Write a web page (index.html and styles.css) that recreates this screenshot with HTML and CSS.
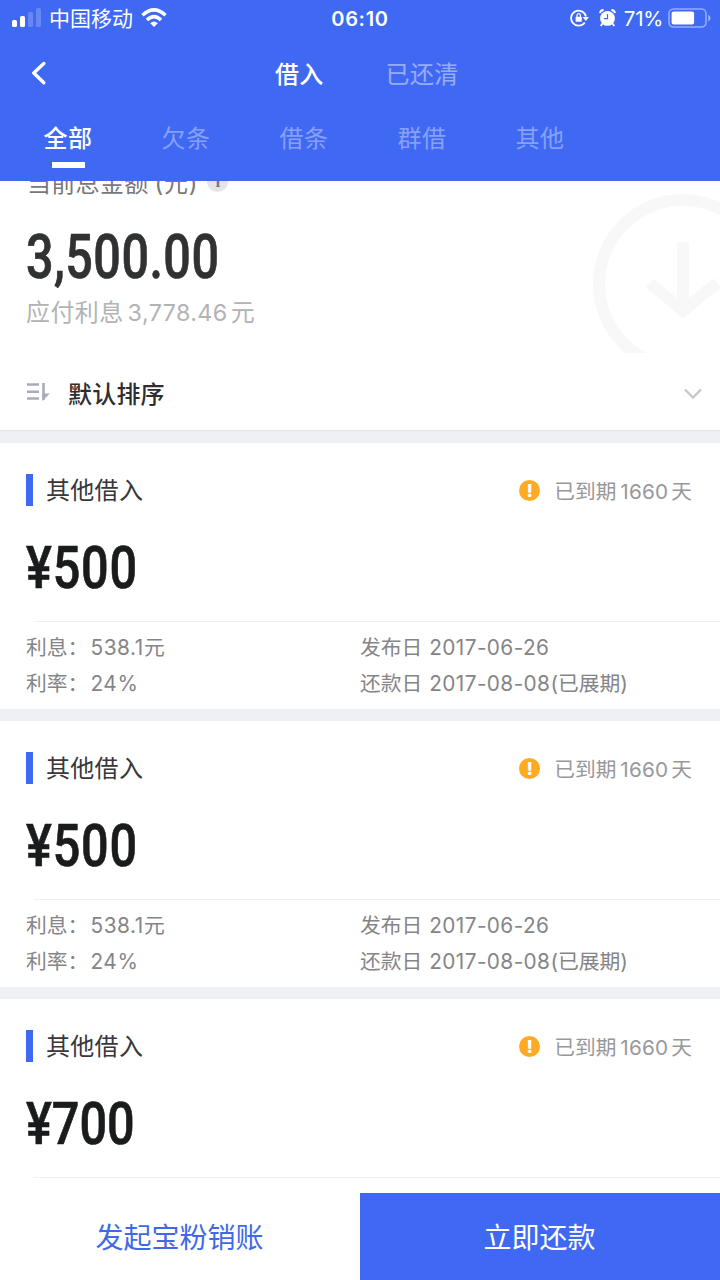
FILE: index.html
```html
<!DOCTYPE html>
<html lang="zh-CN">
<head>
    <meta charset="UTF-8">
    <meta name="viewport" content="width=device-width, initial-scale=1.0">
    <title>借入</title>
    <link rel="stylesheet" href="styles.css">
</head>
<body>
    <div id="app">
        <header class="header">
            <div class="status-bar">
                <div class="status-left">
                    <svg class="signal" width="30" height="20" viewBox="0 0 30 20" fill="#fff">
                        <rect x="0" y="12" width="5" height="7" rx="1.5"/>
                        <rect x="8" y="8" width="5" height="11" rx="1.5"/>
                        <rect x="16" y="4" width="5" height="15" rx="1.5" opacity=".2"/>
                        <rect x="24" y="0" width="5" height="19" rx="1.5" opacity=".2"/>
                    </svg>
                    <span class="carrier">中国移动</span>
                    <svg class="wifi" width="26" height="20" viewBox="0 0 26 20" fill="none" stroke="#fff" stroke-width="3.5">
                        <path d="M1.5 7.2Q13-3.4 24.5 7.2"/>
                        <path d="M6 12Q13 5.2 20 12"/>
                        <path d="M9.2 15.2Q13 11.6 16.8 15.2L13 19Z" fill="#fff" stroke="none"/>
                    </svg>
                </div>
                <span class="time">06:10</span>
                <div class="status-right">
                    <svg class="lock" width="19" height="18" viewBox="0 0 19 18" fill="none" stroke="#fff">
                        <path d="M14.8 13.4A7.5 7.5 0 1 1 15.9 7.5" stroke-width="1.8"/>
                        <path d="M12.6 8H19L15.8 12Z" fill="#fff" stroke="none"/>
                        <rect x="5.6" y="7.8" width="6.2" height="5" rx=".6" fill="#fff" stroke="none"/>
                        <path d="M7 8V6.4a1.7 1.7 0 0 1 3.4 0V8" stroke-width="1.2"/>
                    </svg>
                    <svg class="alarm" width="17" height="18" viewBox="0 0 17 18" fill="#fff">
                        <circle cx="8.5" cy="9.4" r="7.4"/>
                        <path d="M1 4.2Q1.4 1.2 4.6 1M12.4 1Q15.6 1.2 16 4.2" fill="none" stroke="#fff" stroke-width="1.8"/>
                        <path d="M3.5 14.5L1.7 17M13.5 14.5L15.3 17" stroke="#fff" stroke-width="1.9"/>
                        <path d="M8.5 5V9.7H4.8" fill="none" stroke="#4069f3" stroke-width="1.2"/>
                    </svg>
                    <span class="percent">71%</span>
                    <svg class="battery" width="43" height="20" viewBox="0 0 43 20" fill="#fff">
                        <rect x="1" y="1" width="37" height="18" rx="4.5" fill="none" stroke="#fff" stroke-width="1.6" opacity=".45"/>
                        <rect x="3.6" y="3.5" width="22.5" height="13" rx="2"/>
                        <path d="M40.3 6.5Q42.5 8 42.5 10T40.3 13.5Z" opacity=".5"/>
                    </svg>
                </div>
            </div>
            <nav class="nav-bar">
                <svg class="back" width="16" height="24" viewBox="0 0 16 24" fill="none" stroke="#fff" stroke-width="3.4" stroke-linecap="round" stroke-linejoin="round">
                    <path d="M13.8 2.5L3.8 12L13.8 21.8"/>
                </svg>
                <span class="nav-item active">借入</span>
                <span class="nav-item">已还清</span>
            </nav>
            <div class="tabs">
                <span class="tab active">全部</span>
                <span class="tab">欠条</span>
                <span class="tab">借条</span>
                <span class="tab">群借</span>
                <span class="tab">其他</span>
            </div>
        </header>

        <section class="summary">
            <div class="summary-info">
                <p class="summary-title">当前总金额<span class="unit">(元)</span><i class="info">i</i></p>
                <p class="total">3,500.00</p>
                <p class="interest">应付利息<span class="interest-num">3,778.46</span>元</p>
            </div>
            <svg class="arrow-bg" width="128" height="160" viewBox="0 0 128 160" fill="none" stroke="#f8f8f8" stroke-width="12">
                <circle cx="91" cy="91" r="84"/>
                <path d="M91 49V115M58 90L91 118L125 90"/>
            </svg>
        </section>

        <div class="sort">
            <svg width="24" height="20" viewBox="0 0 24 20" fill="none" stroke="#a9adb9" stroke-width="2.4">
                <path d="M1 2.5H13M1 9.8H13M1 16.5H13"/>
                <path d="M17.5 1V18" stroke-width="2.6"/>
                <path d="M16.3 19V11.5H23.8Z" fill="#a9adb9" stroke="none"/>
            </svg>
            <span class="sort-name">默认排序</span>
            <svg class="chevron" width="18" height="12" viewBox="0 0 18 12" fill="none" stroke="#c8c8ca" stroke-width="2.4">
                <path d="M1 1.5L9 9.5L17 1.5"/>
            </svg>
        </div>

        <main class="list">
            <article class="card">
                <div class="card-head">
                    <span class="card-title">其他借入</span>
                    <span class="badge">!</span>
                    <span class="due">已到期<span class="days">1660</span>天</span>
                </div>
                <p class="amount">¥500</p>
                <div class="details">
                    <div class="col">
                        <p>利息：<span class="num">538.1</span>元</p>
                        <p>利率：<span class="num">24%</span></p>
                    </div>
                    <div class="col">
                        <p>发布日 <span class="date">2017-06-26</span></p>
                        <p>还款日 <span class="date">2017-08-08</span>(已展期)</p>
                    </div>
                </div>
            </article>
            <article class="card">
                <div class="card-head">
                    <span class="card-title">其他借入</span>
                    <span class="badge">!</span>
                    <span class="due">已到期<span class="days">1660</span>天</span>
                </div>
                <p class="amount">¥500</p>
                <div class="details">
                    <div class="col">
                        <p>利息：<span class="num">538.1</span>元</p>
                        <p>利率：<span class="num">24%</span></p>
                    </div>
                    <div class="col">
                        <p>发布日 <span class="date">2017-06-26</span></p>
                        <p>还款日 <span class="date">2017-08-08</span>(已展期)</p>
                    </div>
                </div>
            </article>
            <article class="card">
                <div class="card-head">
                    <span class="card-title">其他借入</span>
                    <span class="badge">!</span>
                    <span class="due">已到期<span class="days">1660</span>天</span>
                </div>
                <p class="amount narrow">¥700</p>
                <div class="details"></div>
            </article>
        </main>

        <footer class="footer">
            <button class="btn">发起宝粉销账</button>
            <button class="btn primary">立即还款</button>
        </footer>
    </div>
</body>
</html>
```
FILE: styles.css
```css
*{
    box-sizing: border-box;
}

body{
    margin: 0;
    background-color: #ffffff;
    font-family: Inter, "Noto Sans CJK SC", sans-serif;
}

p{
    margin: 0;
}

svg{
    display: block;
    flex: none;
}

#app{
    display: flex;
    flex-direction: column;
    width: 720px;
    height: 1280px;
    overflow: hidden;
    white-space: nowrap;
}

.header{
    flex: none;
    height: 181px;
    background-color: #4069f3;
    color: #ffffff;
}

.status-bar{
    display: grid;
    grid-template-columns: 1fr auto 1fr;
    align-items: center;
    height: 36px;
    padding: 0 9px 0 12px;
}

.status-left, .status-right{
    display: flex;
    align-items: center;
}

.status-right{
    justify-content: flex-end;
}

.carrier{
    margin: 0 8px 0 7px;
    padding-top: 2px;
    font-size: 21px;
    line-height: 34px;
}

.time{
    margin-right: 3px;
    padding-top: 1px;
    font-size: 20px;
    font-weight: 600;
    letter-spacing: 0.7px;
}

.alarm{
    margin: 0 8px 0 10px;
}

.percent{
    margin-right: 5px;
    padding-top: 1px;
    font-size: 20.5px;
    letter-spacing: -0.3px;
}

.nav-bar{
    display: flex;
    align-items: center;
    height: 74px;
    padding-left: 30px;
}

.nav-item{
    margin: -1px 62px 0 0;
    font-size: 24px;
    letter-spacing: 0.3px;
    opacity: 0.45;
}

.nav-item.active{
    font-weight: 500;
    opacity: 1;
}

.back{
    margin-right: 229px;
}

.tabs{
    display: flex;
    padding: 3px 0 0 9px;
}

.tab{
    display: flex;
    flex-direction: column;
    align-items: center;
    width: 118px;
    color: rgba(255, 255, 255, 0.38);
    font-size: 24px;
    line-height: 52px;
    letter-spacing: 0.4px;
}

.tab.active{
    color: #ffffff;
    font-weight: 500;
}

.tab.active::after{
    content: "";
    width: 33px;
    height: 6px;
    margin-top: -3px;
    background-color: #ffffff;
}

.summary{
    display: flex;
    flex: none;
    justify-content: space-between;
    height: 173px;
    padding-left: 27px;
    overflow: hidden;
}

.summary-title{
    display: flex;
    align-items: center;
    height: 36px;
    margin-top: -18px;
    color: #77787b;
    font-size: 24px;
    letter-spacing: 0.3px;
}

.unit{
    margin-left: 6px;
    letter-spacing: 0.8px;
}

.info{
    width: 21px;
    height: 21px;
    margin-left: 9px;
    border-radius: 50%;
    background-color: #e4e5e9;
    color: #77787b;
    font: bold 17px/22px "Liberation Serif", serif;
    text-align: center;
}

.total{
    height: 96px;
    color: #303133;
    font-family: Roboto, sans-serif;
    font-size: 62px;
    font-weight: 500;
    line-height: 115px;
    letter-spacing: 0.6px;
    transform: translateX(-1px) scaleX(0.782);
    transform-origin: left;
    -webkit-text-stroke: 0.7px #303133;
}

.interest{
    margin-left: -1px;
    color: #b2b3b5;
    font-size: 24px;
    line-height: 36px;
    letter-spacing: 0.4px;
}

.interest-num{
    margin: 0 3px 0 4px;
    font-size: 23.3px;
}

.arrow-bg{
    margin-top: 12px;
}

.sort{
    display: flex;
    flex: none;
    align-items: center;
    height: 76px;
    padding: 0 18px 0 26px;
}

.sort-name{
    flex: 1;
    margin-left: 18px;
    color: #2e2e30;
    font-size: 24px;
    font-weight: 500;
    letter-spacing: 0.2px;
}

.chevron{
    margin-top: 3px;
}

.list{
    flex: 1;
    min-height: 0;
    overflow: hidden;
    border-top: 1px solid #e4e5e8;
}

.card{
    height: 278px;
    border-top: 12px solid #eff0f5;
}

.card-head{
    display: flex;
    align-items: center;
    height: 94px;
    padding: 0 28px 0 26px;
}

.card-title{
    flex: 1;
    height: 32px;
    padding-left: 13px;
    border-left: 7px solid #4069f3;
    color: #38383a;
    font-size: 24px;
    line-height: 34px;
    letter-spacing: 0.3px;
}

.badge{
    width: 21px;
    height: 21px;
    margin-right: 14px;
    border-radius: 50%;
    background-color: #ffaa25;
    color: #ffffff;
    font-size: 18px;
    font-weight: 800;
    line-height: 21px;
    text-align: center;
}

.due{
    margin-top: -1px;
    color: #98989a;
    font-size: 20.7px;
}

.days{
    margin: 0 3px 0 4px;
    letter-spacing: 0.2px;
}

.amount{
    height: 84px;
    padding-left: 26px;
    color: #1a1b1d;
    font-family: Roboto, sans-serif;
    font-size: 60px;
    font-weight: 500;
    line-height: 62px;
    letter-spacing: 1px;
    transform: scaleX(0.81);
    transform-origin: 26px;
    -webkit-text-stroke: 0.7px #1a1b1d;
}

.amount.narrow{
    letter-spacing: 0;
}

.details{
    display: flex;
    padding: 9px 0 0 26px;
    color: #858587;
    font-size: 20.8px;
    line-height: 35.5px;
    background: linear-gradient(#efeff1, #efeff1) 34px 0 / 100% 1px no-repeat;
}

.col{
    width: 334px;
}

.num{
    margin-left: 2px;
    letter-spacing: 0.6px;
}

.date{
    margin-left: 1px;
    letter-spacing: 0.4px;
}

.footer{
    display: flex;
    flex: none;
    height: 87px;
}

.btn{
    flex: 1;
    padding: 0 1px 1px 0;
    border: none;
    background-color: #ffffff;
    color: #4069e8;
    font-family: inherit;
    font-size: 28px;
}

.btn.primary{
    background-color: #4069f3;
    color: #ffffff;
}
```
